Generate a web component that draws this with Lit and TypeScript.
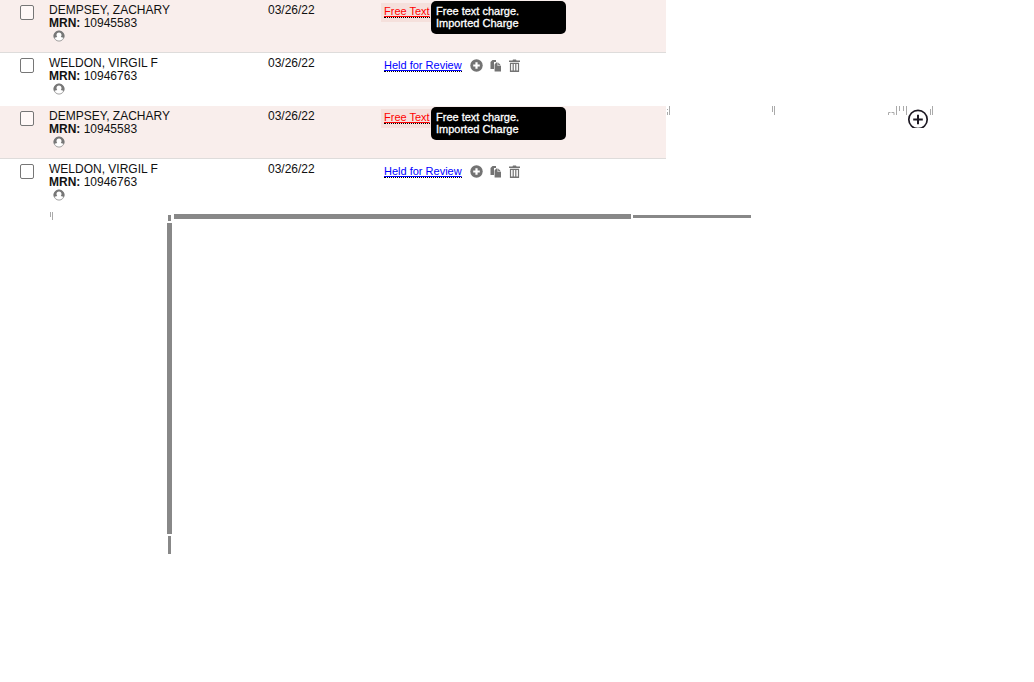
import { LitElement, html, css, svg } from "lit";
import { customElement, property } from "lit/decorators.js";

interface Charge {
  name: string;
  mrn: string;
  date: string;
  status: string;
  notes?: string[];
}

const CHARGES: Charge[] = [
  {
    name: "DEMPSEY, ZACHARY",
    mrn: "10945583",
    date: "03/26/22",
    status: "Free Text",
    notes: ["Free text charge.", "Imported Charge"],
  },
  { name: "WELDON, VIRGIL F", mrn: "10946763", date: "03/26/22", status: "Held for Review" },
];

const addGlyph = svg`<circle cx="6.5" cy="6.5" r="6.2"/><path d="M6.5 3.2v6.6M3.2 6.5h6.6" stroke="#fff" stroke-width="2.2"/>`;
const copyGlyph = svg`<path d="M1.5 3L3.5 1H7v2H5v7H1.500z"/><path d="M5.600 5.500L7.200 3.600H8.600V7H12v5.500H5.600z"/><path d="M9.200 3.600L12 6.400H9.200z"/>`;
const trashGlyph = svg`<path d="M1 1.500h3.500L5 .5h3l.5 1H12V3H1z"/><path d="M2.500 4v8.500h8V4M5.200 4v8M7.800 4v8" fill="none" stroke="#737373" stroke-width="1.200"/><path d="M2 3.800h9V5H2zM2 11.600h9V13H2z"/>`;

@customElement("charge-table")
export class ChargeTable extends LitElement {
  @property({ attribute: false }) charges: Charge[] = [];

  static styles = css`
    :host { display: block; }
    table { width: 100%; border-collapse: separate; border-spacing: 0; table-layout: fixed; }
    td { height: 53px; box-sizing: border-box; padding: 4px 0 0; vertical-align: top; }
    .select { width: 49px; padding: 5px 0 0 20px; }
    .patient { width: 219px; }
    .date { width: 113px; }
    .state { padding-top: 3px; }
    .flagged td { background: #f9eeec; border-bottom: 1px solid #dedcdb; }
    input {
      appearance: none; display: block; box-sizing: border-box; width: 14px; height: 15px;
      margin: 0; border: 1px solid #767676; border-radius: 2px; background: #fff;
    }
    .flagged input { background: #fff8f7; }
    input:checked { background: #767676; }
    .person { display: block; width: 12px; height: 12px; margin-left: 4px; }
    .line { display: flex; align-items: flex-start; position: relative; }
    .status { font-size: 11px; line-height: 12px; padding: 3px 2px 3px 3px; }
    .flagged .status { background: #f5e0dc; padding-top: 2px; padding-bottom: 4px; }
    a { display: block; color: #00f; border-bottom: 1px dotted #000; line-height: 12px; text-decoration-thickness: 1px; }
    .flagged a { color: #f00; }
    .tip {
      position: absolute; left: 50px; top: -2px; box-sizing: border-box; width: 135px;
      padding: 4px 5px 5px; border-radius: 5px; background: #000; color: #fff;
      font-size: 11px; line-height: 12px; -webkit-text-stroke: 0.3px #fff;
    }
    .tip span { display: block; }
    .actions { display: flex; gap: 6px; margin: 3px 0 0 6px; }
    button { display: block; border: 0; padding: 0; background: none; width: 13px; height: 13px; cursor: pointer; }
    button svg { display: block; fill: #737373; }
  `;

  private action(label: string, glyph: unknown) {
    return html`<button type="button" aria-label=${label}>
      <svg width="13" height="13" viewBox="0 0 13 13">${glyph}</svg>
    </button>`;
  }

  render() {
    return html`<table>
      <tbody>
        ${this.charges.map(
          (c) => html`<tr class=${c.notes ? "flagged" : "plain"}>
            <td class="select"><input type="checkbox" aria-label="Select ${c.name}" /></td>
            <td class="patient">
              <div>${c.name}</div>
              <div><b>MRN:</b> ${c.mrn}</div>
              <svg class="person" viewBox="0 0 12 12" aria-hidden="true">
                <circle cx="6" cy="6" r="5.1" fill="#fff" stroke="#959595" stroke-width=".9" />
                <path d="M1 7.800A5.100 5.100 0 0 1 6 .8a5.100 5.100 0 0 1 5 7C10.300 7.600 9 7.300 7.800 7 9.300 5 8.300 2.600 6 2.600S2.700 5 4.200 7C3 7.300 1.700 7.600 1 7.800z" fill="#777" />
              </svg>
            </td>
            <td class="date">${c.date}</td>
            <td class="state">
              <div class="line">
                <div class="status"><a href="#">${c.status}</a></div>
                ${c.notes
                  ? html`<div class="tip" role="tooltip">${c.notes.map((n) => html`<span>${n}</span>`)}</div>`
                  : html`<div class="actions">
                      ${this.action("Add", addGlyph)}${this.action("Copy", copyGlyph)}${this.action("Delete", trashGlyph)}
                    </div>`}
              </div>
            </td>
          </tr>`
        )}
      </tbody>
    </table>`;
  }
}

@customElement("app-root")
export class AppRoot extends LitElement {
  static styles = css`
    :host {
      display: block; min-height: 100vh; background: #fff; color: #111;
      font: 12px/13px "Liberation Sans", Arial, sans-serif;
    }
    .sheet { display: grid; grid-template-columns: 666fr 368fr; }
    .blank { min-width: 0; }
    .edge { display: flex; align-items: flex-start; min-width: 0; }
    .marks { display: block; flex: none; fill: none; stroke: #aaa; }
    .add { display: block; flex: none; width: 22px; height: 19px; margin-top: 3px; padding: 0; border: 0; background: none; overflow: hidden; cursor: pointer; }
    .add svg { display: block; }
    .rails { display: flex; align-items: flex-start; }
    .stub { flex: none; width: 118px; padding-left: 49px; }
    .frame { flex: 1; min-width: 0; padding-top: 2px; }
    .top { display: flex; align-items: center; gap: 2px; height: 5px; }
    .tick { width: 3px; height: 6px; margin: 1px 1px 0 1px; background: #888; align-self: flex-start; }
    .wide { width: 457px; height: 5px; background: #888; }
    .thin { width: 118px; height: 3px; background: #888; }
    .tall { width: 5px; height: 311px; margin-top: 4px; background: #888; }
    .short { width: 3px; height: 18px; margin: 2px 0 0 1px; background: #888; }
  `;

  render() {
    return html`
      <main>
        <div class="sheet">
          <charge-table .charges=${CHARGES}></charge-table>
          <div class="blank"></div>
          <charge-table .charges=${CHARGES}></charge-table>
          <div class="edge">
            <svg class="marks" width="241" height="10" viewBox="0 0 241 10" aria-hidden="true">
              <path d="M1.5 3v1M1.5 6v3M3.5 0v9M106.5 0v6M108.5 0v9M222.5 9V6.5h2M225.5 6.5h2.5V9M230.5 0v9M233.5 0v5M237.5 0v5M240.5 0v9" />
            </svg>
            <button class="add" type="button" aria-label="Add charge">
              <svg width="22" height="22" viewBox="0 0 22 22" fill="none" stroke="#1c1822">
                <circle cx="11" cy="10.5" r="9.2" stroke-width="1.7" />
                <path d="M11 5.700v9.600M6.200 10.500h9.600" stroke-width="2" />
              </svg>
            </button>
            <svg class="marks" width="6" height="10" viewBox="0 0 6 10" aria-hidden="true">
              <path d="M1.5 3v6M3.5 0v9" />
            </svg>
          </div>
        </div>
        <div class="rails">
          <div class="stub">
            <svg class="marks" width="5" height="8" viewBox="0 0 5 8" aria-hidden="true">
              <path d="M1.5 0v5M3.5 0v8" />
            </svg>
          </div>
          <div class="frame">
            <div class="top"><div class="tick"></div><div class="wide"></div><div class="thin"></div></div>
            <div class="tall"></div>
            <div class="short"></div>
          </div>
        </div>
      </main>
    `;
  }
}
